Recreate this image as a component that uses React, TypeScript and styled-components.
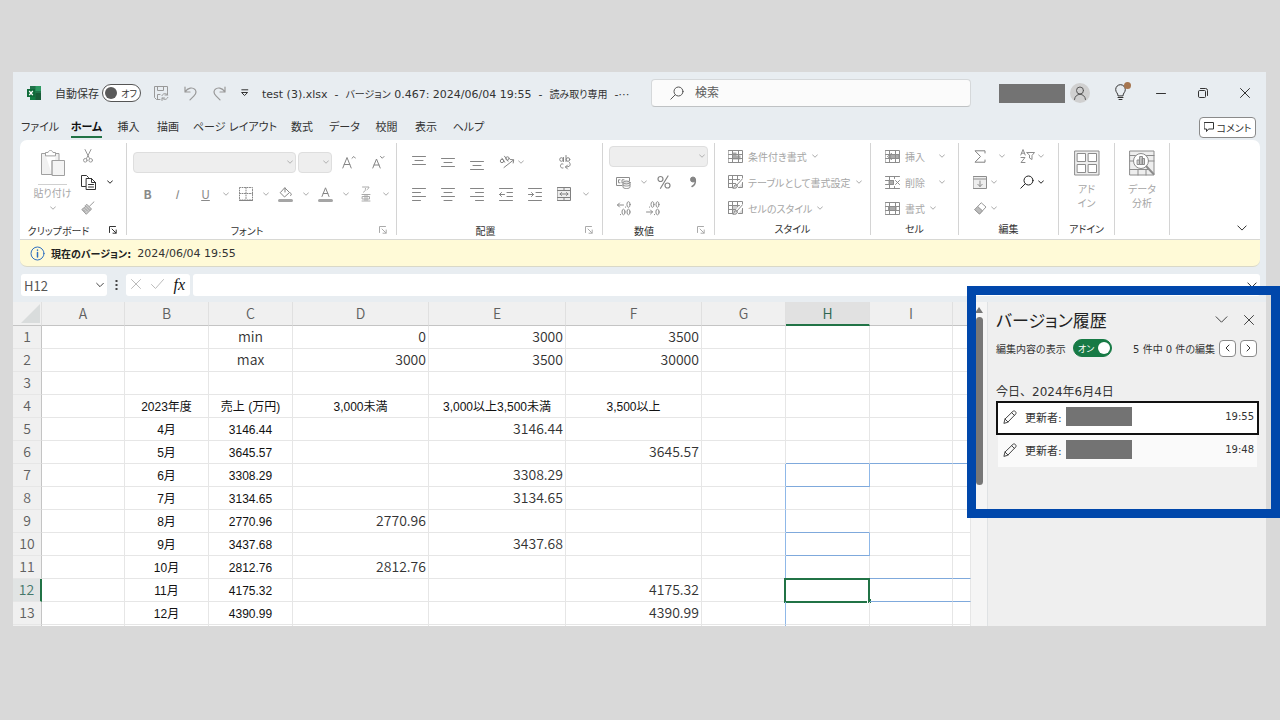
import React from "react";
import styled, { createGlobalStyle, css } from "styled-components";

const ui = `"DejaVu Sans", "Noto Sans CJK JP", sans-serif`;
const sheetFont = `"Noto Sans CJK JP", sans-serif`;
const cellFont = `"Liberation Sans", "Noto Sans CJK JP", sans-serif`;

const GlobalStyle = createGlobalStyle`
  *, *::before, *::after { box-sizing: border-box; }
  body {
    margin: 0;
    background: #d9d9d9;
    color: #333;
    font-family: ${ui};
    font-size: 11px;
    font-feature-settings: "palt";
  }
  button, input, select { font: inherit; color: inherit; font-feature-settings: inherit; margin: 0; }
  button { background: none; border: 0; padding: 0; }
`;

const Page = styled.div`
  min-height: 100vh;
  padding: 72px 14px 94px 13px;
  overflow: hidden;
`;
const AppWindow = styled.main`
  background: #e8edf1;
`;

/* ---------- title bar ---------- */
const TitleBar = styled.header`
  display: grid;
  grid-template-columns: minmax(0, 638fr) 320px minmax(0, 295fr);
  align-items: center;
  height: 42px;
`;
const TitleLeft = styled.div`
  display: flex;
  align-items: center;
  padding-left: 13px;
  white-space: nowrap;
`;
const AutoSave = styled.label`
  display: flex;
  align-items: center;
  justify-content: space-between;
  width: 86px;
  margin: 0 6px 0 13px;
`;
const Track = styled.span<{ $on?: boolean }>`
  position: relative;
  display: flex;
  flex-direction: ${(p) => (p.$on ? "row" : "row-reverse")};
  align-items: center;
  justify-content: space-between;
  width: 39px;
  height: 18px;
  padding: ${(p) => (p.$on ? "0 1px 0 4px" : "0 3px 0 2px")};
  border-radius: 9px;
  border: 1px solid ${(p) => (p.$on ? "#177a45" : "#555")};
  background: ${(p) => (p.$on ? "#177a45" : "#fff")};
  color: ${(p) => (p.$on ? "#fff" : "#333")};
  font-size: 9px;
  input { position: absolute; inset: 0; opacity: 0; width: 100%; height: 100%; }
`;
const Knob = styled.i<{ $on?: boolean }>`
  width: 12px;
  height: 12px;
  border-radius: 50%;
  background: ${(p) => (p.$on ? "#fff" : "#5a5a5a")};
`;
const QuickButton = styled.button<{ $w?: number }>`
  display: flex;
  justify-content: center;
  width: ${(p) => p.$w ?? 29}px;
`;
const FileName = styled.span`
  margin-left: 6px;
  white-space: pre;
  small { font-size: 10px; }
`;
const SearchBox = styled.label`
  display: flex;
  align-items: center;
  gap: 11px;
  height: 28px;
  padding: 0 18px;
  border-radius: 4px;
  border: 1px solid #d5d8da;
  border-bottom-color: #bfc2c4;
  background: #fbfbfb;
  input { flex: 1; min-width: 0; border: 0; outline: 0; background: none; padding: 0; font-size: 12px; }
  input::placeholder { color: #5c5c5c; opacity: 1; }
`;
const TitleRight = styled.div`
  display: flex;
  align-items: center;
  justify-content: flex-end;
`;
const Redacted = styled.span`
  width: 66px;
  height: 19px;
  background: #737373;
`;
const Avatar = styled.button`
  display: flex;
  align-items: center;
  justify-content: center;
  width: 20px;
  height: 20px;
  margin: 0 22px 0 5px;
  border-radius: 50%;
  background: #d0d0d0;
`;
const HintButton = styled.button`
  margin-right: 8px;
`;
const CaptionButton = styled.button`
  display: flex;
  justify-content: center;
  width: 42px;
`;

/* ---------- tabs ---------- */
const TabBar = styled.nav`
  display: flex;
  align-items: center;
  height: 26px;
  padding: 0 10px 0 3px;
`;
const Tab = styled.button<{ $w: number; $active?: boolean }>`
  display: flex;
  justify-content: center;
  width: ${(p) => p.$w}px;
  white-space: nowrap;
  span {
    line-height: 17px;
    margin-top: 3px;
    border-bottom: 2px solid transparent;
    ${(p) => p.$active && css`font-weight: 700; color: #111; border-color: #217346;`}
  }
`;
const CommentButton = styled.button`
  display: flex;
  align-items: center;
  justify-content: center;
  gap: 3px;
  width: 57px;
  height: 21px;
  margin-left: auto;
  border: 1px solid #8a8a8a;
  border-radius: 4px;
  background: #fff;
  font-size: 10px;
`;

/* ---------- ribbon ---------- */
const Ribbon = styled.section`
  display: flex;
  height: 100px;
  margin: 0 6px 0 7px;
  padding: 3px 0 4px;
  border-radius: 7px 7px 0 0;
  border-bottom: 1px solid #d8d8d4;
  background: #fff;
  color: #a6a6a6;
  font-size: 10px;
  white-space: nowrap;
`;
const Group = styled.div<{ $w: number; $pad?: number }>`
  display: flex;
  flex-direction: column;
  width: ${(p) => p.$w}px;
  padding-left: ${(p) => p.$pad ?? 0}px;
  border-right: 1px solid #d4d4d4;
`;
const Controls = styled.div`
  display: flex;
  flex: none;
  height: 78px;
`;
const Stack = styled.div<{ $roomy?: boolean; $w?: number }>`
  display: flex;
  flex-direction: column;
  padding-top: ${(p) => (p.$roomy ? 3 : 0)}px;
  ${(p) => p.$w && css`width: ${p.$w}px;`}
`;
const Row = styled.div<{ $tall?: boolean }>`
  display: flex;
  align-items: center;
  height: ${(p) => (p.$tall ? 32 : 26)}px;
`;
const Tool = styled.button<{ $w?: number; $gap?: number }>`
  display: flex;
  align-items: center;
  justify-content: center;
  flex: none;
  width: ${(p) => p.$w ?? 29}px;
  height: 22px;
  margin-left: ${(p) => p.$gap ?? 0}px;
`;
const Letter = styled.span`
  font-family: ${sheetFont};
  font-size: 12px;
  line-height: 16px;
  color: #8a8a8a;
`;
const CaretButton = styled.button<{ $w?: number }>`
  display: flex;
  justify-content: center;
  flex: none;
  width: ${(p) => p.$w ?? 11}px;
`;
const LabelTool = styled.button`
  display: flex;
  align-items: center;
  gap: 5px;
`;
const ComboWrap = styled.span<{ $w: number }>`
  display: flex;
  align-items: center;
  width: ${(p) => p.$w}px;
  height: 21px;
  margin-right: 2px;
  padding-right: 2px;
  border: 1px solid #dedede;
  border-radius: 4px;
  background: #eee;
  select { flex: 1; min-width: 0; height: 19px; appearance: none; border: 0; background: none; padding: 0; }
`;
const BigTool = styled.button<{ $w: number }>`
  display: flex;
  flex-direction: column;
  align-items: center;
  width: ${(p) => p.$w}px;
  padding-top: 7px;
  line-height: 14px;
  svg + span { margin-top: 7px; }
  span + svg { margin-top: 4px; }
`;
const PasteRule = styled.i`
  width: 29px;
  height: 1px;
  margin: 6px 0 2px;
  background: #d0d0d0;
`;
const GroupFooter = styled.div`
  display: grid;
  grid-template-columns: 1fr 35px;
  align-items: center;
  justify-items: center;
  flex: none;
  height: 18px;
  color: #333;
  button { justify-self: end; margin-right: 9px; }
`;
const PlainFooter = styled.div<{ $pad?: number }>`
  flex: none;
  height: 18px;
  margin-left: -${(p) => p.$pad ?? 0}px;
  text-align: center;
  line-height: 18px;
  color: #333;
`;
const CollapseButton = styled.button`
  margin: auto 13px 0 auto;
`;

/* ---------- message + formula bars ---------- */
const MessageBar = styled.section`
  display: flex;
  align-items: center;
  gap: 6px;
  height: 27px;
  margin: 0 6px 0 7px;
  padding-left: 10px;
  border-radius: 0 0 7px 7px;
  border-bottom: 1px solid #d9d8c8;
  background: #fffad7;
  strong { color: #222; font-size: 10px; }
`;
const FormulaBar = styled.section`
  display: flex;
  align-items: center;
  height: 35px;
  padding: 1px 6px 0 8px;
`;
const White = styled.div`
  display: flex;
  align-items: center;
  height: 22px;
  border-radius: 3px;
  background: #fff;
`;
const NameBox = styled(White)`
  width: 86px;
  padding: 0 3px;
  input { flex: 1; min-width: 0; border: 0; padding: 0; background: none; font-family: ${sheetFont}; font-size: 13px; color: #555; }
`;
const Dots = styled.span`
  display: flex;
  justify-content: center;
  width: 19px;
`;
const FxBox = styled(White)`
  justify-content: space-around;
  width: 64px;
  margin-right: 3px;
`;
const Fx = styled.button`
  font-family: "Liberation Serif", serif;
  font-style: italic;
  font-size: 16px;
  color: #111;
`;
const FormulaInput = styled(White)`
  flex: 1;
  padding-right: 3px;
  input { flex: 1; min-width: 0; border: 0; background: none; }
`;

/* ---------- sheet ---------- */
const Body = styled.div`
  display: flex;
`;
const SheetArea = styled.div`
  flex: 1;
  min-width: 0;
  height: 324px;
  overflow: hidden;
  background: #fff;
`;
const Sheet = styled.table`
  width: 100%;
  table-layout: fixed;
  border-collapse: separate;
  border-spacing: 0;
  font-family: ${sheetFont};
  font-size: 14px;
  font-weight: 350;
  line-height: 20px;
  color: #333;
  th { font-weight: 350; padding: 0 0 2px; background: #f0f0f0; color: #606060; }
`;
const ColHead = styled.th<{ $active?: boolean }>`
  height: 24px;
  border-right: 1px solid #e0e0e0;
  border-bottom: 1px solid #c4c4c4;
  ${(p) => p.$active && css`
    && { background: #e1e1e1; color: #2c6650; padding-bottom: 1px; }
    border-bottom: 2px solid #217346;
  `}
`;
const RowHead = styled.th<{ $active?: boolean }>`
  height: 23px;
  border-right: 1px solid #c4c4c4;
  border-bottom: 1px solid #e6e6e6;
  ${(p) => p.$active && css`
    && { background: #e1e4e4; color: #45786a; }
    border-right: 2px solid #217346;
  `}
`;
const SelectAll = styled.svg`
  display: block;
  margin: 2px 0 0 8px;
`;
const Cell = styled.td<{ $align?: string; $arial?: boolean; $right?: boolean; $bottom?: boolean }>`
  position: relative;
  height: 23px;
  padding: 0 2px 2px;
  white-space: nowrap;
  border-right: 1px solid ${(p) => (p.$right ? "#8fb8e8" : "#e6e6e6")};
  border-bottom: 1px solid ${(p) => (p.$bottom ? "#7fa9dc" : "#e6e6e6")};
  text-align: ${(p) => p.$align ?? "right"};
  ${(p) => p.$arial && css`
    font-family: ${cellFont};
    font-size: 12px;
    font-weight: 400;
    color: #111;
    padding: 2px 2px 0;
  `}
`;
const Selection = styled.span`
  position: absolute;
  inset: -1px -1px -2px -2px;
  border: 2px solid #217346;
  &::after {
    content: "";
    position: absolute;
    right: -3px;
    bottom: -2px;
    width: 4px;
    height: 4px;
    background: #217346;
    border-left: 1px solid #fff;
  }
`;

/* ---------- version history ---------- */
const Side = styled.div`
  position: relative;
  display: flex;
  width: 295px;
`;
const Gutter = styled.div`
  display: flex;
  flex-direction: column;
  align-items: center;
  width: 17px;
  padding-top: 5px;
  border-right: 1px solid #dfe2e4;
  background: #f5f5f5;
`;
const Thumb = styled.i`
  width: 7px;
  height: 168px;
  margin-top: 4px;
  border-radius: 4px;
  background: #777;
`;
const Pane = styled.aside`
  flex: 1;
  padding: 1px 7px 0 8px;
  background: #efefef;
`;
const PaneHeader = styled.div`
  display: flex;
  align-items: center;
  gap: 16px;
  height: 36px;
  padding-right: 5px;
  h2 { flex: 1; margin: 0; font-weight: 400; font-size: 17px; line-height: 24px; color: #222; }
`;
const PaneRow = styled.div`
  display: flex;
  align-items: center;
  height: 18px;
  padding-right: 2px;
  font-size: 10px;
  white-space: nowrap;
`;
const ShowEdits = styled.label`
  display: flex;
  align-items: center;
  justify-content: space-between;
  width: 116px;
  margin-right: auto;
`;
const StepButton = styled.button`
  display: flex;
  align-items: center;
  justify-content: center;
  width: 17px;
  height: 17px;
  margin-left: 4px;
  border: 1px solid #8a8a8a;
  border-radius: 4px;
  background: #fff;
`;
const DateHeading = styled.h3`
  margin: 27px 0 0;
  font-weight: 400;
  font-size: 12px;
  line-height: 17px;
  font-feature-settings: normal;
`;
const Versions = styled.ul`
  margin: 0;
  padding: 0;
  list-style: none;
`;
const Version = styled.li<{ $current?: boolean }>`
  button {
    display: flex;
    align-items: center;
    width: 100%;
    height: 34px;
    padding: 0 3px 3px 5px;
    text-align: left;
    background: ${(p) => (p.$current ? "#fff" : "#fafafa")};
    background-clip: ${(p) => (p.$current ? "border-box" : "padding-box")};
    border: 2px solid ${(p) => (p.$current ? "#111" : "transparent")};
    border-top-width: ${(p) => (p.$current ? 2 : 0)}px;
  }
  span.who { width: 41px; margin-left: 8px; }
  time { margin-left: auto; font-size: 10px; }
`;
const Highlight = styled.div`
  position: absolute;
  top: -16px;
  left: -4px;
  right: -14px;
  height: 232px;
  border: 9px solid #0047ab;
  pointer-events: none;
`;

/* ---------- drawings ---------- */
type IconProps = { w?: number; h?: number; c?: string; s?: number; children: React.ReactNode };
const Icon = ({ w = 16, h = 16, c = "#999", s = 1, children }: IconProps) => (
  <svg width={w} height={h} viewBox={`0 0 ${w} ${h}`} fill="none" stroke={c} strokeWidth={s} strokeLinecap="round" strokeLinejoin="round" aria-hidden>
    {children}
  </svg>
);
const Chevron = ({ size = 6, c = "#aaa" }: { size?: number; c?: string }) => (
  <svg width={size} height={size} viewBox="0 0 12 12" fill="none" stroke={c} strokeWidth={12 / size} strokeLinecap="round" strokeLinejoin="round" aria-hidden>
    <path d="M1 3.5l5 5 5-5" />
  </svg>
);
const Caret = ({ dark, w }: { dark?: boolean; w?: number }) => (
  <CaretButton $w={w} aria-label="その他"><Chevron c={dark ? "#222" : "#aaa"} /></CaretButton>
);
const Lines = ({ d }: { d: string }) => <Icon w={14} h={16} c="#858585"><path d={d} /></Icon>;
const Cross = ({ size = 10, c = "#333" }: { size?: number; c?: string }) => (
  <Icon w={size} h={size} c={c}><path d={`M.5 .5L${size - 0.5} ${size - 0.5}M${size - 0.5} .5L.5 ${size - 0.5}`} /></Icon>
);
const Launcher = ({ dark }: { dark?: boolean }) => (
  <Icon w={8} h={8} c={dark ? "#333" : "#aaa"}><path d="M.5 6.5v-6h6M3 3l4 4M7.2 4v3.2H4" /></Icon>
);
const TableIcon = ({ children, fill }: { children?: React.ReactNode; fill?: React.ReactNode }) => (
  <Icon w={15} h={13} c="#8c8c8c">
    {fill}
    <path d="M.5 .5h14v12H.5zM.5 4.5h14M.5 8.5h14M4.5 .5v12M10.5 .5v12" />
    {children}
  </Icon>
);
const BrushTable = ({ shade }: { shade?: boolean }) => (
  <Icon w={15} h={14} c="#8c8c8c">
    {shade && <path d="M4.500 4.500h7L7 10l-2.500 2.500z" fill="#d0d0d0" stroke="none" />}
    <path d="M.5 12.500V.5h14v2.500M.5 4.500h11M.5 8.500h7M4.500 .5v12M9.500 .5v5M.5 12.500h4" />
    <path d="M14.300 4L8.500 10.500M14.500 7.500v5h-4M8 9.500c-2.200 0-1.500 3-3.200 3.700 2.700 .6 4.700-.5 4.700-2.200z" fill="#ddd" />
  </Icon>
);
const Magnifier = ({ c }: { c: string }) => (
  <Icon w={14} h={14} c={c}><circle cx="8.500" cy="5.500" r="4.500" /><path d="M5.200 8.800L.8 13.200" /></Icon>
);
const Pencil = () => (
  <Icon w={14} h={14} c="#444"><path d="M1 13l1-4L10 1.300c1.500-1.300 4 1 2.700 2.700L5 12zM8.700 2.700l2.700 2.700M2 9l3 3" /></Icon>
);
const Align = { left: "M.5 2.500h13M.5 6.500h8M.5 10.500h13M.5 14.500h8", center: "M.5 2.500h13M3 6.500h8M.5 10.500h13M3 14.500h8", right: "M.5 2.500h13M5.500 6.500h8M.5 10.500h13M5.500 14.500h8" };

const Combo = ({ w, label }: { w: number; label: string }) => (
  <ComboWrap $w={w}><select aria-label={label} disabled><option></option></select><Chevron c="#b0b0b0" /></ComboWrap>
);
const Footer = ({ name, dark }: { name: string; dark?: boolean }) => (
  <GroupFooter><span>{name}</span><button aria-label={`${name}の設定`}><Launcher dark={dark} /></button></GroupFooter>
);

/* ---------- data ---------- */
const tabs: [string, number][] = [
  ["ファイル", 48], ["ホーム", 45], ["挿入", 39], ["描画", 40], ["ページ レイアウト", 94],
  ["数式", 40], ["データ", 45], ["校閲", 39], ["表示", 40], ["ヘルプ", 45],
];
const columns: [string, number][] = [
  ["A", 83], ["B", 84], ["C", 84], ["D", 136], ["E", 137], ["F", 136], ["G", 84], ["H", 84], ["I", 83],
];
const letters = [...columns.map((c) => c[0]), ""];
const rows: Record<string, string>[] = [
  { C: "min", D: "0", E: "3000", F: "3500" },
  { C: "max", D: "3000", E: "3500", F: "30000" },
  {},
  { B: "2023年度", C: "売上 (万円)", D: "3,000未満", E: "3,000以上3,500未満", F: "3,500以上" },
  { B: "4月", C: "3146.44", E: "3146.44" },
  { B: "5月", C: "3645.57", F: "3645.57" },
  { B: "6月", C: "3308.29", E: "3308.29" },
  { B: "7月", C: "3134.65", E: "3134.65" },
  { B: "8月", C: "2770.96", D: "2770.96" },
  { B: "9月", C: "3437.68", E: "3437.68" },
  { B: "10月", C: "2812.76", D: "2812.76" },
  { B: "11月", C: "4175.32", F: "4175.32" },
  { B: "12月", C: "4390.99", F: "4390.99" },
  {},
];
const blueBottom = new Set(["H6", "I6", "6", "H7", "H9", "H10", "H11", "I11", "11", "H12", "I12", "12"]);
const blueRight = (col: string, row: number) => (col === "G" && row >= 7) || (col === "H" && (row === 7 || row === 10));

const RibbonBar = () => (
  <Ribbon aria-label="リボン">
    <Group $w={107} $pad={6}>
      <Controls>
        <BigTool $w={53}>
          <Icon w={26} h={28} c="#a0a0a0">
            <path d="M5 3.500H1.500v21H12M14 24.500h-2V10.500h7V3.500h-3.500" fill="#f1f1f1" />
            <path d="M5.500 5.500v-3h2.500c.6-2.700 4.400-2.700 5 0h2.500v3z" fill="#fff" />
            <path d="M12.500 10.500h12v15h-12z" fill="#f4f4f4" />
          </Icon>
          <PasteRule />
          <span>貼り付け</span>
          <Chevron />
        </BigTool>
        <Stack>
          <Row><Tool $w={18}><Icon w={10} h={14} c="#999"><path d="M2 .5l4.500 9M8 .5l-4.500 9" /><circle cx="2.300" cy="11.300" r="1.800" /><circle cx="7.700" cy="11.300" r="1.800" /></Icon></Tool></Row>
          <Row><Tool $w={18}><Icon w={15} h={15} c="#333"><path d="M4.500 11.500h-4V.5h5l2 2M5.500 3.500h5l4 4v7h-9zM10.500 3.500v4h4M7.500 9.500h5M7.500 12h5" /></Icon></Tool><Caret w={25} dark /></Row>
          <Row><Tool $w={18}><Icon w={14} h={14} c="#999"><path d="M13 .8L8.500 5.200M6 3.500l4.500 4.500-1.500 1.500L4.500 5zM4.500 5.500L.8 8.500l4.500 4.800L9 9.500" fill="#ccc" /><path d="M2.500 9l1.500 1.500M4 7.500L6.500 10" /></Icon></Tool></Row>
        </Stack>
      </Controls>
      <Footer name="クリップボード" dark />
    </Group>

    <Group $w={270} $pad={6}>
      <Controls>
        <Stack $roomy>
          <Row $tall>
            <Combo w={163} label="フォント" /><Combo w={34} label="フォント サイズ" />
            <Tool><Icon w={14} h={14} c="#858585"><path d="M.8 13L5 2.500 9.200 13M2.200 9.500h5.600M10 3.200l1.800-1.700 1.700 1.700" /></Icon></Tool>
            <Tool><Icon w={14} h={14} c="#858585"><path d="M1.800 13L5.500 4l3.700 9M3 10h5M9.500 1.500l1.800 1.700 1.700-1.700" /></Icon></Tool>
          </Row>
          <Row $tall>
            <Tool><Letter><b>B</b></Letter></Tool><Tool><Letter><i>I</i></Letter></Tool><Tool><Letter><u>U</u></Letter></Tool><Caret />
            <Tool><Icon w={14} h={14} c="#858585"><path d="M.5 .5h13v12.500H.5zM7 .5v12.500M.5 6.500h13" strokeDasharray="1 1.500" /><path d="M.5 13.500h13" /></Icon></Tool><Caret />
            <Tool><Icon w={15} h={15} c="#858585"><path d="M7 1l4.500 4.500-5 4.500L2.500 6zM7 1v4M12 5.500c2 2 1.500 3 .5 3" /><path d="M1.500 13.500h12" stroke="#a5a5a5" strokeWidth="3" /></Icon></Tool><Caret />
            <Tool><Icon w={15} h={15} c="#858585"><path d="M4 9.500L7.500 .8 11 9.500M5.200 6.500h4.600" /><path d="M1.500 13.500h12" stroke="#a5a5a5" strokeWidth="3" /></Icon></Tool><Caret />
            <Tool><Icon w={10} h={16} c="#aaa"><path d="M1.500 1h6.500c-.3 1.500-1 2-2 2.700M4.500 2.500c0 2-.5 3-2 3.700M1 8.500h8M4 8.500v6M6 8.500v6M1.500 10.500h7v2.500h-7zM1 15h8" /></Icon></Tool><Caret />
          </Row>
        </Stack>
      </Controls>
      <Footer name="フォント" />
    </Group>

    <Group $w={206} $pad={7}>
      <Controls>
        <Stack $roomy>
          <Row $tall>
            <Tool><Lines d="M.5 2.500h13M3 6.500h8M.5 10.500h13" /></Tool>
            <Tool><Lines d="M.5 4.500h13M3 8.500h8M.5 12.500h13" /></Tool>
            <Tool><Lines d="M.5 7.500h13M3 11.500h8M.5 15.500h13" /></Tool>
            <Tool $w={20} $gap={6}><Icon w={16} h={14} c="#858585"><circle cx="3" cy="6" r="1.700" /><path d="M3 3.200l2.700 4M5.500 1.200l3.500 5" /><circle cx="8.500" cy="3.500" r="1.700" /><path d="M5 12.500L14.500 5M11.500 4.500l3.200 .3-.5 3.200" /></Icon></Tool><Caret w={7} />
            <Tool $gap={26}><Icon w={14} h={15} c="#858585"><circle cx="3.500" cy="4.500" r="1.800" /><path d="M5.500 2.500v4M8 .5v6" /><circle cx="10" cy="4.500" r="1.800" /><path d="M5 9c-3.500-1.500-3.500 5 0 4M11.500 7.500c2 3 0 4.500-4 4.500M9.500 10l-2 2 2 2" /></Icon></Tool>
          </Row>
          <Row $tall>
            <Tool><Lines d={Align.left} /></Tool><Tool><Lines d={Align.center} /></Tool><Tool><Lines d={Align.right} /></Tool>
            <Tool><Lines d="M.5 2.500h13M8 6.500h5.500M8 10.500h5.500M.5 14.500h13M.5 8.500h5M2.500 6.500l-2 2 2 2" /></Tool>
            <Tool><Lines d="M.5 2.500h13M8 6.500h5.500M8 10.500h5.500M.5 14.500h13M.5 8.500h5M3.500 6.500l2 2-2 2" /></Tool>
            <Tool><Icon w={14} h={14} c="#808080"><path d="M.5 .5h13v13H.5z" fill="#eee" /><path d="M.5 3.500h13M.5 10.500h13M7 .5v3M7 10.500v3M3 7h8M4.500 5.500L3 7l1.500 1.500M9.500 5.500L11 7 9.500 8.500" /></Icon></Tool>
            <Caret w={15} />
          </Row>
        </Stack>
      </Controls>
      <Footer name="配置" />
    </Group>

    <Group $w={112} $pad={6}>
      <Controls>
        <Stack>
          <Row><Combo w={99} label="数値の書式" /></Row>
          <Row>
            <Tool><Icon w={15} h={13} c="#8c8c8c"><path d="M6 9.500H.5v-8h13V5M4 3.800H2.500v3H4M6 6.800v-3h2" /><ellipse cx="10.500" cy="6.500" rx="3.500" ry="1.500" fill="#ddd" /><path d="M7 6.500V11c0 2 7 2 7 0V6.500M7 9c0 1.500 7 1.500 7 0" /></Icon></Tool><Caret />
            <Tool><Icon w={14} h={14} c="#858585" s={1.2}><circle cx="3.500" cy="4" r="2.500" /><circle cx="10.500" cy="10.500" r="2.500" /><path d="M11 1L3.500 13.300" /></Icon></Tool>
            <Tool><Icon w={8} h={12} c="#858585"><circle cx="4" cy="3.500" r="2.500" fill="#858585" /><path d="M6.300 4c.4 3-1.300 5.500-3.300 6.500" strokeWidth="1.500" /></Icon></Tool>
          </Row>
          <Row>
            <Tool><Icon w={14} h={15} c="#8c8c8c"><path d="M.5 4h6M2.500 2l-2 2 2 2" /><ellipse cx="11.500" cy="3.500" rx="1.600" ry="2.800" /><ellipse cx="6.500" cy="11" rx="1.500" ry="2.800" /><ellipse cx="11.500" cy="11" rx="1.500" ry="2.800" /><path d="M3.500 13.500v.2M8.500 6v.2" /></Icon></Tool>
            <Tool><Icon w={14} h={15} c="#8c8c8c"><ellipse cx="6.500" cy="3.500" rx="1.500" ry="2.800" /><ellipse cx="11.500" cy="3.500" rx="1.500" ry="2.800" /><path d="M3.500 6v.2M.5 11h6M4.500 9l2 2-2 2M8.500 13.500v.2" /><ellipse cx="11.500" cy="11" rx="1.600" ry="2.800" /></Icon></Tool>
          </Row>
        </Stack>
      </Controls>
      <Footer name="数値" />
    </Group>

    <Group $w={156} $pad={13}>
      <Controls>
        <Stack>
          <Row><LabelTool><TableIcon fill={<path d="M4.500 2.500h4v3h4v4h-8z" fill="#aaa" stroke="none" />} />条件付き書式<Chevron /></LabelTool></Row>
          <Row><LabelTool><BrushTable />テーブルとして書式設定<Chevron /></LabelTool></Row>
          <Row><LabelTool><BrushTable shade />セルのスタイル<Chevron /></LabelTool></Row>
        </Stack>
      </Controls>
      <PlainFooter $pad={13}>スタイル</PlainFooter>
    </Group>

    <Group $w={88} $pad={14}>
      <Controls>
        <Stack>
          <Row><LabelTool><TableIcon fill={<path d="M6 4.500h8v4H6z" fill="#aaa" />}><path d="M6.500 3.500l-4 3 4 3" stroke="#888" /></TableIcon>挿入</LabelTool><Caret w={33} /></Row>
          <Row><LabelTool><Icon w={15} h={13} c="#8c8c8c"><path d="M.5 .5h14M.5 4.500h8v4h-8M.5 12.500h14M4.500 .5v12M9.500 .5v2M9.500 10.500v2" /><path d="M4.500 4.500h4v4h-4z" fill="#aaa" /><path d="M10.500 4.500l4 4M14.500 4.500l-4 4" /></Icon>削除</LabelTool><Caret w={33} /></Row>
          <Row><LabelTool><TableIcon fill={<path d="M4 4.500h7v4H4z" fill="#aaa" />} />書式<Chevron /></LabelTool></Row>
        </Stack>
      </Controls>
      <PlainFooter $pad={14}>セル</PlainFooter>
    </Group>

    <Group $w={100} $pad={11}>
      <Controls>
        <Stack $w={47}>
          <Row><Tool $w={20}><Icon w={12} h={13} c="#808080"><path d="M11 3V.8H1L6.500 6.500 1 12.200h10V10" /></Icon></Tool><Caret w={23} /></Row>
          <Row><Tool $w={20}><Icon w={14} h={13} c="#8c8c8c"><path d="M.5 .5h13v12H.5zM.5 3h13" fill="#eee" /><path d="M7 5v5.500M4.800 8.300L7 10.500l2.200-2.200" /></Icon></Tool><Caret w={7} /></Row>
          <Row><Tool $w={20}><Icon w={13} h={13} c="#999"><path d="M7.500 1L12 5l-6.500 7L1 8z" /><path d="M4 4.800L8.500 8.800 5.500 12 1 8z" fill="#bbb" /></Icon></Tool><Caret w={7} /></Row>
        </Stack>
        <Stack>
          <Row><Tool $w={20}><Icon w={15} h={14} c="#8c8c8c"><path d="M.8 6L3 .5 5.200 6M1.500 4.200h3M1 8.500h4L1 13.500h4M7 3.500h7.500L12 6.500v4l-2.500-1.500V6.500z" /></Icon></Tool><Caret w={7} /></Row>
          <Row><Tool $w={20}><Magnifier c="#222" /></Tool><Caret w={7} dark /></Row>
        </Stack>
      </Controls>
      <PlainFooter $pad={11}>編集</PlainFooter>
    </Group>

    <Group $w={56}>
      <Controls>
        <BigTool $w={55}>
          <Icon w={26} h={26} c="#8c8c8c"><path d="M1 1h24v24H1z" fill="#eee" /><path d="M3.500 3.500h8v8h-8zM14.500 3.500h8v8h-8zM3.500 14.500h8v8h-8zM14.500 14.500h8v8h-8z" fill="#fff" /></Icon>
          <span>アド<br />イン</span>
        </BigTool>
      </Controls>
      <PlainFooter>アドイン</PlainFooter>
    </Group>

    <Group $w={55}>
      <Controls>
        <BigTool $w={54}>
          <Icon w={26} h={26} c="#8c8c8c"><path d="M1 1h24v24H1z" fill="#eee" /><path d="M1 5.500h24M1 11h5M1 19.500h18M9 19.500V25M17 19.500V25M19 11h6" /><circle cx="12" cy="11" r="7.500" fill="#fff" /><path d="M8.500 10h2v4.500h-2zM11 6.500h2.500v8H11zM13.500 8.500h2v6h-2z" fill="#ccc" /><path d="M17.500 16.500L24.500 24" strokeWidth="2" /></Icon>
          <span>データ<br />分析</span>
        </BigTool>
      </Controls>
    </Group>
    <CollapseButton aria-label="リボンを折りたたむ"><Chevron size={10} c="#333" /></CollapseButton>
  </Ribbon>
);

export default function App() {
  return (
    <>
      <GlobalStyle />
      <Page>
        <AppWindow>
          <TitleBar>
            <TitleLeft>
              <svg width="16" height="16" viewBox="0 0 16 16" aria-label="Excel">
                <path d="M4 1h11v14H4z" fill="#21734a" /><path d="M9.500 1H15v5H9.500z" fill="#2d9a62" /><path d="M4 6h5.500v9H4z" fill="#107c41" /><path d="M9.500 8H15v7H9.500z" fill="#185c37" />
                <path d="M1 4h8v8H1z" fill="#0f6b39" /><path d="M3.200 6l3.600 4.200M6.800 6l-3.600 4.200" stroke="#fff" strokeWidth="1.300" />
              </svg>
              <AutoSave>自動保存<Track><input type="checkbox" />オフ<Knob /></Track></AutoSave>
              <QuickButton aria-label="保存"><Icon w={15} h={15} c="#999"><path d="M6 13.500H2.500l-2-2V.5h13v5M3.500 .5v4h6v-4M3.500 13V8.500H6M8 9.500c1-2.500 4.500-2.500 5.500-.5M13.500 6.500V9H11M13.800 11.500c-1 2.500-4.500 2.500-5.500 .5M8 14.500V12h2.500" /></Icon></QuickButton>
              <QuickButton aria-label="元に戻す"><Icon w={13} h={15} c="#999" s={1.2}><path d="M1 1v5h5M1 6c3-4.500 7.500-5 10-2.500 2 2.500 .8 4.500-1 6.300L6 13.800" /></Icon></QuickButton>
              <QuickButton aria-label="やり直し"><Icon w={13} h={15} c="#999" s={1.2}><path d="M12 1v5H7M12 6C9 1.500 4.500 1 2 3.500c-2 2.500-.8 4.500 1 6.300l4 4" /></Icon></QuickButton>
              <QuickButton $w={22} aria-label="クイック アクセス ツール バーのユーザー設定"><Icon w={8} h={8} c="#333"><path d="M.8 .8h6M1 3.500h5.600L3.800 6.300z" /></Icon></QuickButton>
              <FileName>
                {"test (3).xlsx  -  "}<small>バージョン</small>{" 0.467: 2024/06/04 19:55  -  "}<small>読み取り専用</small>{"  -⋯"}
              </FileName>
            </TitleLeft>
            <SearchBox><Magnifier c="#555" /><input type="search" placeholder="検索" aria-label="検索" /></SearchBox>
            <TitleRight>
              <Redacted />
              <Avatar aria-label="アカウント"><Icon w={14} h={14} c="#555"><circle cx="7" cy="4.500" r="3.500" /><path d="M1.500 13.500c.5-7 10.500-7 11 0" /></Icon></Avatar>
              <HintButton aria-label="ヒント"><svg width="20" height="20" viewBox="0 0 20 20" fill="none" stroke="#333" strokeLinecap="round"><path d="M6 13.500c0-2.500-2.300-3-2.300-6a4.800 4.800 0 0 1 9.600 0c0 3-2.300 3.500-2.300 6zM6 15.500h5M7 17.500h3" /><circle cx="15.500" cy="3.500" r="3.500" fill="#a67650" stroke="none" /></svg></HintButton>
              <CaptionButton aria-label="最小化"><Icon w={10} h={10} c="#333"><path d="M.5 5.500h9" /></Icon></CaptionButton>
              <CaptionButton aria-label="元のサイズに戻す"><Icon w={10} h={10} c="#333"><path d="M.5 3.500q0-1 1-1h5q1 0 1 1v5q0 1-1 1h-5q-1 0-1-1zM2.500 .5h5q2 0 2 2v5" /></Icon></CaptionButton>
              <CaptionButton aria-label="閉じる"><Cross /></CaptionButton>
            </TitleRight>
          </TitleBar>

          <TabBar>
            {tabs.map(([name, w]) => (
              <Tab key={name} $w={w} $active={name === "ホーム"}><span>{name}</span></Tab>
            ))}
            <CommentButton><Icon w={10} h={10} c="#333"><path d="M.5 .5h9v6.500H4.500L2.500 9.500V7h-2z" /></Icon>コメント</CommentButton>
          </TabBar>

          <RibbonBar />

          <MessageBar>
            <Icon w={15} h={15} c="#2f6fc0"><circle cx="7.500" cy="7.500" r="6.500" /><path d="M7.500 6.500v4.500M7.500 4v.2" strokeWidth="1.500" /></Icon>
            <strong>現在のバージョン:</strong><span>2024/06/04 19:55</span>
          </MessageBar>

          <FormulaBar>
            <NameBox><input aria-label="名前ボックス" defaultValue="H12" /><Chevron size={8} c="#444" /></NameBox>
            <Dots><svg width="3" height="10" viewBox="0 0 3 10" fill="#444" aria-hidden><path d="M.5 0h2v2h-2zM.5 4h2v2h-2zM.5 8h2v2h-2z" /></svg></Dots>
            <FxBox>
              <button aria-label="キャンセル"><Cross c="#bbb" /></button>
              <button aria-label="入力"><Icon w={13} h={10} c="#bbb"><path d="M.5 5.500l4 4 8-9" /></Icon></button>
              <Fx aria-label="関数の挿入">fx</Fx>
            </FxBox>
            <FormulaInput><input aria-label="数式" /><Chevron size={10} c="#333" /></FormulaInput>
          </FormulaBar>

          <Body>
            <SheetArea>
              <Sheet>
                <colgroup>
                  <col style={{ width: 29 }} />
                  {columns.map(([n, w]) => <col key={n} style={{ width: w }} />)}
                  <col />
                </colgroup>
                <thead>
                  <tr>
                    <ColHead><SelectAll width="19" height="19" viewBox="0 0 19 19" aria-hidden><path d="M19 0v19H0z" fill="#d9dcdc" /></SelectAll></ColHead>
                    {letters.map((l) => <ColHead key={l} $active={l === "H"}>{l}</ColHead>)}
                  </tr>
                </thead>
                <tbody>
                  {rows.map((r, i) => {
                    const n = i + 1;
                    return (
                      <tr key={n}>
                        <RowHead $active={n === 12}>{n < 14 ? n : ""}</RowHead>
                        {letters.map((l) => {
                          const arial = n === 4 || (n > 4 && (l === "B" || l === "C"));
                          return (
                            <Cell
                              key={l}
                              $arial={arial}
                              $align={arial || l === "C" ? "center" : "right"}
                              $right={blueRight(l, n)}
                              $bottom={blueBottom.has(l + n)}
                            >
                              {r[l]}
                              {l === "H" && n === 12 && <Selection />}
                            </Cell>
                          );
                        })}
                      </tr>
                    );
                  })}
                </tbody>
              </Sheet>
            </SheetArea>

            <Side>
              <Gutter><svg width="8" height="6" viewBox="0 0 8 6" aria-hidden><path d="M4 0l4 6H0z" fill="#777" /></svg><Thumb /></Gutter>
              <Pane>
                <PaneHeader>
                  <h2>バージョン履歴</h2>
                  <button aria-label="作業ウィンドウのオプション"><Chevron size={13} c="#444" /></button>
                  <button aria-label="閉じる"><Cross c="#444" /></button>
                </PaneHeader>
                <PaneRow>
                  <ShowEdits>編集内容の表示<Track $on><input type="checkbox" defaultChecked />オン<Knob $on /></Track></ShowEdits>
                  5 件中 0 件の編集
                  <StepButton aria-label="前へ"><Icon w={5} h={8} c="#333"><path d="M4 1L1 4l3 3" /></Icon></StepButton>
                  <StepButton aria-label="次へ"><Icon w={5} h={8} c="#333"><path d="M1 1l3 3-3 3" /></Icon></StepButton>
                </PaneRow>
                <DateHeading>今日、2024年6月4日</DateHeading>
                <Versions>
                  {["19:55", "19:48"].map((t, i) => (
                    <Version key={t} $current={i === 0}>
                      <button><Pencil /><span className="who">更新者:</span><Redacted /><time>{t}</time></button>
                    </Version>
                  ))}
                </Versions>
              </Pane>
              <Highlight />
            </Side>
          </Body>
        </AppWindow>
      </Page>
    </>
  );
}
